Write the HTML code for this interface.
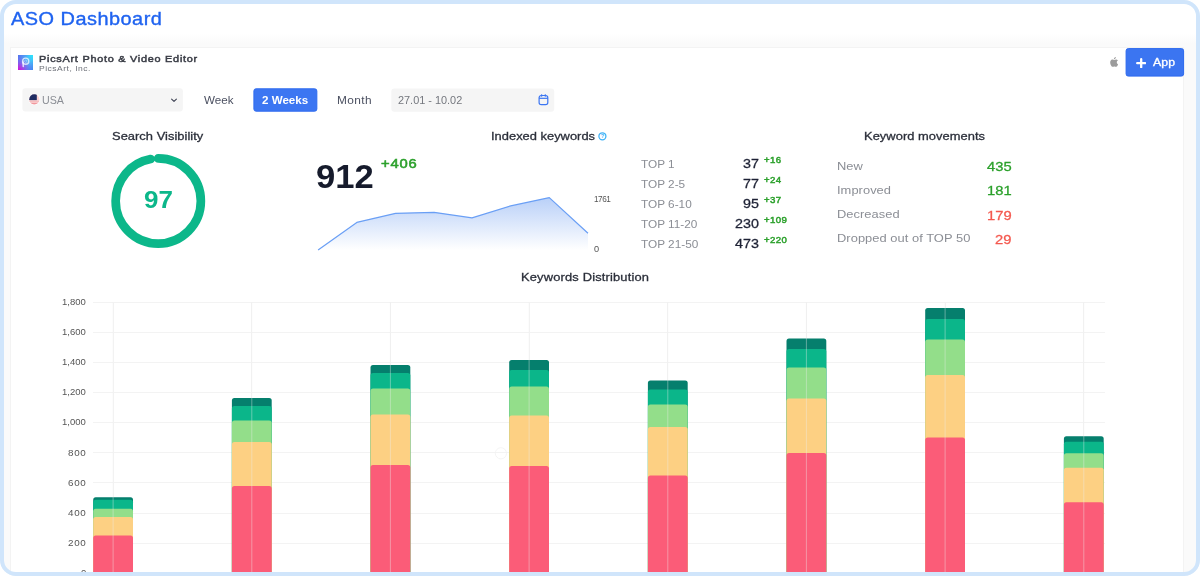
<!DOCTYPE html>
<html>
<head>
<meta charset="utf-8">
<title>ASO Dashboard</title>
<style>
*{box-sizing:border-box;margin:0;padding:0}
html,body{width:1200px;height:576px;overflow:hidden;background:#fff}
body{font-family:"Liberation Sans",sans-serif;position:relative;color:#2b2f3a}
.bg{position:absolute;left:0;top:0;width:1200px;height:576px;border-radius:16px;background:#fafafa;overflow:hidden}
.top{position:absolute;left:0;top:0;width:1200px;height:46px;background:linear-gradient(#fff 0,#fff 33px,#fafafa 43px,#fafafa 46px)}
.card{position:absolute;left:10px;top:47px;width:1174px;height:560px;background:#fff;border:1px solid #f3f3f3}
.frame{position:absolute;left:0;top:0;width:1200px;height:576px;border:4px solid #d0e5fb;border-radius:16px;z-index:50;pointer-events:none}
.abs{position:absolute;white-space:nowrap;line-height:1}
.t{position:absolute;white-space:nowrap;line-height:1;transform-origin:0 0;will-change:transform}
.r{text-align:right}
.g{color:#2f9e2c}
.rd{color:#f4594f}
.lbl{color:#8b8e95}
.num{color:#1e2235}
</style>
</head>
<body>
<div class="bg"><div class="top"></div><div class="card"></div></div>

<svg class="abs" style="left:0;top:0" width="1200" height="576" viewBox="0 0 1200 576">
<g stroke="#f3f3f3" stroke-width="1" shape-rendering="crispEdges"><line x1="93" x2="1104.5" y1="573.40" y2="573.40"/><line x1="93" x2="1104.5" y1="543.25" y2="543.25"/><line x1="93" x2="1104.5" y1="513.10" y2="513.10"/><line x1="93" x2="1104.5" y1="482.95" y2="482.95"/><line x1="93" x2="1104.5" y1="452.80" y2="452.80"/><line x1="93" x2="1104.5" y1="422.65" y2="422.65"/><line x1="93" x2="1104.5" y1="392.50" y2="392.50"/><line x1="93" x2="1104.5" y1="362.35" y2="362.35"/><line x1="93" x2="1104.5" y1="332.20" y2="332.20"/><line x1="93" x2="1104.5" y1="302.05" y2="302.05"/><line x1="113.1" x2="113.1" y1="302" y2="580"/><line x1="251.8" x2="251.8" y1="302" y2="580"/><line x1="390.4" x2="390.4" y1="302" y2="580"/><line x1="529.1" x2="529.1" y1="302" y2="580"/><line x1="667.8" x2="667.8" y1="302" y2="580"/><line x1="806.4" x2="806.4" y1="302" y2="580"/><line x1="945.1" x2="945.1" y1="302" y2="580"/><line x1="1083.8" x2="1083.8" y1="302" y2="580"/></g>
<g><rect x="93.2" y="497.2" width="39.8" height="82.8" rx="2.5" ry="2.5" fill="#057f6d"/><rect x="93.2" y="499.7" width="39.8" height="80.3" rx="2.5" ry="2.5" fill="#0bb68a"/><rect x="93.2" y="508.7" width="39.8" height="71.3" rx="2.5" ry="2.5" fill="#93de8a"/><rect x="93.2" y="517.0" width="39.8" height="63.0" rx="2.5" ry="2.5" fill="#fdd083"/><rect x="93.2" y="535.5" width="39.8" height="44.5" rx="2.5" ry="2.5" fill="#fb5c78"/><rect x="231.9" y="398.0" width="39.8" height="182.0" rx="2.5" ry="2.5" fill="#057f6d"/><rect x="231.9" y="406.0" width="39.8" height="174.0" rx="2.5" ry="2.5" fill="#0bb68a"/><rect x="231.9" y="420.6" width="39.8" height="159.4" rx="2.5" ry="2.5" fill="#93de8a"/><rect x="231.9" y="442.0" width="39.8" height="138.0" rx="2.5" ry="2.5" fill="#fdd083"/><rect x="231.9" y="486.0" width="39.8" height="94.0" rx="2.5" ry="2.5" fill="#fb5c78"/><rect x="370.5" y="365.0" width="39.8" height="215.0" rx="2.5" ry="2.5" fill="#057f6d"/><rect x="370.5" y="373.0" width="39.8" height="207.0" rx="2.5" ry="2.5" fill="#0bb68a"/><rect x="370.5" y="388.6" width="39.8" height="191.4" rx="2.5" ry="2.5" fill="#93de8a"/><rect x="370.5" y="414.4" width="39.8" height="165.6" rx="2.5" ry="2.5" fill="#fdd083"/><rect x="370.5" y="465.0" width="39.8" height="115.0" rx="2.5" ry="2.5" fill="#fb5c78"/><rect x="509.2" y="360.0" width="39.8" height="220.0" rx="2.5" ry="2.5" fill="#057f6d"/><rect x="509.2" y="370.0" width="39.8" height="210.0" rx="2.5" ry="2.5" fill="#0bb68a"/><rect x="509.2" y="386.4" width="39.8" height="193.6" rx="2.5" ry="2.5" fill="#93de8a"/><rect x="509.2" y="415.4" width="39.8" height="164.6" rx="2.5" ry="2.5" fill="#fdd083"/><rect x="509.2" y="466.0" width="39.8" height="114.0" rx="2.5" ry="2.5" fill="#fb5c78"/><rect x="647.9" y="380.6" width="39.8" height="199.4" rx="2.5" ry="2.5" fill="#057f6d"/><rect x="647.9" y="389.4" width="39.8" height="190.6" rx="2.5" ry="2.5" fill="#0bb68a"/><rect x="647.9" y="404.4" width="39.8" height="175.6" rx="2.5" ry="2.5" fill="#93de8a"/><rect x="647.9" y="427.0" width="39.8" height="153.0" rx="2.5" ry="2.5" fill="#fdd083"/><rect x="647.9" y="475.4" width="39.8" height="104.6" rx="2.5" ry="2.5" fill="#fb5c78"/><rect x="786.5" y="338.4" width="39.8" height="241.6" rx="2.5" ry="2.5" fill="#057f6d"/><rect x="786.5" y="349.0" width="39.8" height="231.0" rx="2.5" ry="2.5" fill="#0bb68a"/><rect x="786.5" y="367.4" width="39.8" height="212.6" rx="2.5" ry="2.5" fill="#93de8a"/><rect x="786.5" y="398.4" width="39.8" height="181.6" rx="2.5" ry="2.5" fill="#fdd083"/><rect x="786.5" y="453.0" width="39.8" height="127.0" rx="2.5" ry="2.5" fill="#fb5c78"/><rect x="925.2" y="308.0" width="39.8" height="272.0" rx="2.5" ry="2.5" fill="#057f6d"/><rect x="925.2" y="319.0" width="39.8" height="261.0" rx="2.5" ry="2.5" fill="#0bb68a"/><rect x="925.2" y="339.4" width="39.8" height="240.6" rx="2.5" ry="2.5" fill="#93de8a"/><rect x="925.2" y="375.0" width="39.8" height="205.0" rx="2.5" ry="2.5" fill="#fdd083"/><rect x="925.2" y="437.4" width="39.8" height="142.6" rx="2.5" ry="2.5" fill="#fb5c78"/><rect x="1063.9" y="436.2" width="39.8" height="143.8" rx="2.5" ry="2.5" fill="#057f6d"/><rect x="1063.9" y="441.7" width="39.8" height="138.3" rx="2.5" ry="2.5" fill="#0bb68a"/><rect x="1063.9" y="453.3" width="39.8" height="126.7" rx="2.5" ry="2.5" fill="#93de8a"/><rect x="1063.9" y="467.8" width="39.8" height="112.2" rx="2.5" ry="2.5" fill="#fdd083"/><rect x="1063.9" y="502.2" width="39.8" height="77.8" rx="2.5" ry="2.5" fill="#fb5c78"/></g>
<g stroke="rgba(235,235,235,0.4)" stroke-width="1"><line x1="113.1" x2="113.1" y1="302" y2="580"/><line x1="251.8" x2="251.8" y1="302" y2="580"/><line x1="390.4" x2="390.4" y1="302" y2="580"/><line x1="529.1" x2="529.1" y1="302" y2="580"/><line x1="667.8" x2="667.8" y1="302" y2="580"/><line x1="806.4" x2="806.4" y1="302" y2="580"/><line x1="945.1" x2="945.1" y1="302" y2="580"/><line x1="1083.8" x2="1083.8" y1="302" y2="580"/></g>

</svg>
<svg class="abs" style="left:490px;top:443px" width="22" height="22" viewBox="0 0 22 22"><circle cx="10.900" cy="10.300" r="5.600" fill="none" stroke="#f1f1f1" stroke-width="0.800"/></svg>

<div id="root">
<svg class="abs" style="left:0;top:0" width="1200" height="120" viewBox="0 0 1200 120">
<rect x="22.400" y="88.350" width="160.500" height="23.200" rx="3" fill="#f5f5f5"/>
<rect x="391.300" y="88.450" width="162.900" height="23.250" rx="3" fill="#f5f5f5"/>
<rect x="253.900" y="88.800" width="62.950" height="22.400" rx="2.200" fill="#3c76f2" stroke="#2f6bef" stroke-width="1"/>
<rect x="1126.100" y="48.600" width="57.500" height="27.500" rx="2.200" fill="#3b75f1" stroke="#2c68ee" stroke-width="1"/>
</svg>

<!-- app icon -->
<svg class="abs" style="left:18px;top:54.5px" width="15" height="15" viewBox="0 0 15 15">
<defs>
<linearGradient id="ig1" x1="0" y1="1" x2="1" y2="0"><stop offset="0" stop-color="#d60cd6"/><stop offset="0.32" stop-color="#8a62ee"/><stop offset="0.6" stop-color="#55aef6"/><stop offset="1" stop-color="#27e8fc"/></linearGradient>
<linearGradient id="ig2" x1="0" y1="0" x2="1" y2="1"><stop offset="0" stop-color="#4f74ee" stop-opacity="0.95"/><stop offset="0.42" stop-color="#5a6cf0" stop-opacity="0"/><stop offset="0.62" stop-color="#3f8df5" stop-opacity="0"/><stop offset="1" stop-color="#3f86f3" stop-opacity="0.95"/></linearGradient>
</defs>
<rect width="15" height="15" fill="url(#ig1)"/>
<rect width="15" height="15" fill="url(#ig2)"/>
<circle cx="7.700" cy="6.200" r="3.100" fill="none" stroke="#fff" stroke-opacity="0.72" stroke-width="1.400"/>
<circle cx="7.700" cy="6.200" r="1.200" fill="none" stroke="#fff" stroke-opacity="0.45" stroke-width="0.800"/>
<path d="M5 7 L5.300 11.500" stroke="#fff" stroke-opacity="0.75" stroke-width="1.600" stroke-linecap="round" fill="none"/>
</svg>

<!-- apple -->
<svg class="abs" style="left:1109.9px;top:57.2px" width="8.4" height="10.27" viewBox="0 0 18 22">
<path fill="#9c9c9c" d="M12.6 0c.1 1.2-.4 2.400-1.100 3.200-.8.900-2 1.600-3.100 1.500-.2-1.200.4-2.400 1.100-3.100C10.300.700 11.600.100 12.600 0zM16.700 7.500c-.1.100-2.200 1.300-2.200 3.900 0 3.100 2.700 4.100 2.800 4.200 0 .1-.4 1.500-1.400 2.900-.9 1.300-1.800 2.500-3.200 2.500s-1.800-.8-3.400-.8c-1.600 0-2.100.8-3.400.9-1.400.1-2.400-1.400-3.300-2.600C.800 15.900-.600 11.400 1.300 8.200c.9-1.600 2.600-2.600 4.400-2.700 1.400 0 2.700.9 3.500.9.800 0 2.400-1.100 4.100-1 .700 0 2.700.3 3.900 2.100z"/>
</svg>
<!-- +App button -->
<svg class="abs" style="left:1135.6px;top:57.6px" width="10.4" height="10.4" viewBox="0 0 10.4 10.4"><path d="M5.2 1.200V9.200M1.200 5.200H9.200" stroke="#fff" stroke-width="2.300" stroke-linecap="round"/></svg>

<!-- country select -->
<svg class="abs" style="left:28px;top:93px" width="13" height="13" viewBox="0 0 13 13">
<defs><clipPath id="fc"><circle cx="6.3" cy="6.400" r="5.100"/></clipPath></defs>
<circle cx="6.3" cy="6.4" r="5.9" fill="#fff" fill-opacity="0.8"/>
<g clip-path="url(#fc)">
<rect x="0" y="0" width="13" height="13" fill="#f9cfcf"/>
<rect x="0" y="8.3" width="13" height="1" fill="#f5b5b8"/>
<rect x="0" y="10.300" width="13" height="1.200" fill="#ee7f88"/>
<rect x="0" y="0" width="8.800" height="7.100" fill="#1f2c62"/>
</g>
</svg>
<svg class="abs" style="left:170px;top:96.5px" width="8" height="7" viewBox="0 0 8 7"><path d="M1.600 2.100L4 4.400L6.400 2.100" fill="none" stroke="#3c4052" stroke-width="1.100" stroke-linecap="round" stroke-linejoin="round"/></svg>


<svg class="abs" style="left:537.7px;top:94.25px" width="11" height="12" viewBox="0 0 11 12">
<rect x="1.100" y="1.500" width="8.700" height="9.200" rx="2.200" fill="none" stroke="#3c76f2" stroke-width="1.200"/>
<path d="M1.100 4.300H9.800" stroke="#3c76f2" stroke-width="1.200" fill="none"/>
<path d="M3.600 0.900V2M7.300 0.900V2" stroke="#3c76f2" stroke-width="1.500" stroke-linecap="round" fill="none"/>
</svg>

<!-- Search visibility -->
<svg class="abs" style="left:105px;top:148px" width="106" height="106" viewBox="105 148 106 106">
<circle cx="158.25" cy="201" r="42.6" fill="none" stroke="#0cb78a" stroke-width="8.700" stroke-linecap="round" stroke-dasharray="259.6 400" transform="rotate(-90 158.25 201)"/>
</svg>

<!-- Indexed keywords -->
<svg class="abs" style="left:597px;top:131px" width="11" height="11" viewBox="0 0 11 11"><circle cx="5.400" cy="5.300" r="3.500" fill="none" stroke="#3eb1f6" stroke-width="1.300"/><text x="5.400" y="7.300" font-size="5.600" font-weight="bold" text-anchor="middle" fill="#3eb1f6" font-family="Liberation Sans, sans-serif">?</text></svg>
<svg class="abs" style="left:300px;top:190px" width="300" height="65" viewBox="300 190 300 65">
<defs><linearGradient id="sg" x1="0" y1="0" x2="0" y2="1"><stop offset="0" stop-color="#b9d0f8"/><stop offset="1" stop-color="#ffffff"/></linearGradient></defs>
<path d="M318.1 250.100L356.800 222.400L395.500 213.300L434.100 212.300L472 217.900L510.700 205.900L549.300 197.600L588 233.300V250.100Z" fill="url(#sg)"/>
<path d="M318.1 250.100L356.800 222.400L395.500 213.300L434.100 212.300L472 217.900L510.700 205.900L549.300 197.600L588 233.300" fill="none" stroke="#6a9ff5" stroke-width="1.200" stroke-linejoin="round"/>
</svg>

<!-- TOP list -->



<!-- Keyword movements -->

<div class="t" style="left:11.08px;top:11px;font-size:17.8px;color:#1f63f0;letter-spacing:0.432px;transform:scaleX(1.12);-webkit-text-stroke:0.35px #1f63f0;">ASO Dashboard</div>
<div class="t" style="left:39.14px;top:54px;font-size:9.7px;color:#3b3e47;letter-spacing:0.672px;transform:scaleX(1.12);-webkit-text-stroke:0.5px #3b3e47;">PicsArt Photo &amp; Video Editor</div>
<div class="t" style="left:39.14px;top:65px;font-size:7.6px;color:#6d7078;letter-spacing:0.449px;transform:scaleX(1.12);">PicsArt, Inc.</div>
<div class="t" style="left:42.0px;top:96px;font-size:10px;color:#8b8e95;transform:scaleX(1.0684);">USA</div>
<div class="t" style="left:203.7px;top:95px;font-size:10.6px;color:#4b5061;transform:scaleX(1.0953);">Week</div>
<div class="t" style="left:262.22px;top:96px;font-size:10.4px;color:#fff;font-weight:bold;transform:scaleX(1.1166);">2 Weeks</div>
<div class="t" style="left:337.16px;top:95px;font-size:10.6px;color:#4b5061;letter-spacing:0.366px;transform:scaleX(1.12);">Month</div>
<div class="t" style="left:398.0px;top:95px;font-size:10.8px;color:#74777e;transform:scaleX(1.0088);">27.01 - 10.02</div>
<div class="t" style="left:111.92px;top:131px;font-size:11.5px;color:#2b2f3a;letter-spacing:0.032px;transform:scaleX(1.12);-webkit-text-stroke:0.3px #2b2f3a;">Search Visibility</div>
<div class="t" style="left:490.58px;top:131px;font-size:11.5px;color:#2b2f3a;letter-spacing:0.013px;transform:scaleX(1.12);-webkit-text-stroke:0.3px #2b2f3a;">Indexed keywords</div>
<div class="t" style="left:864.06px;top:131px;font-size:11.5px;color:#2b2f3a;letter-spacing:0.04px;transform:scaleX(1.12);-webkit-text-stroke:0.3px #2b2f3a;">Keyword movements</div>
<div class="t" style="left:521.36px;top:272px;font-size:11.5px;color:#2b2f3a;letter-spacing:0.152px;transform:scaleX(1.12);-webkit-text-stroke:0.3px #2b2f3a;">Keywords Distribution</div>
<div class="t" style="left:144.08px;top:188px;font-size:23.8px;color:#0cb78a;font-weight:bold;transform:scaleX(1.0909);">97</div>
<div class="t" style="left:315.92px;top:160px;font-size:33.8px;color:#161b2c;font-weight:bold;transform:scaleX(1.0233);">912</div>
<div class="t" style="left:381.22px;top:157px;font-size:13.2px;color:#2ba02b;letter-spacing:0.756px;transform:scaleX(1.12);-webkit-text-stroke:0.55px #2ba02b;">+406</div>
<div class="t" style="left:593.8px;top:196px;font-size:8.2px;color:#555;letter-spacing:-0.467px;">1761</div>
<div class="t" style="left:594.32px;top:246px;font-size:8.2px;color:#555;transform:scaleX(1.12);">0</div>
<div class="t" style="left:1152.78px;top:57px;font-size:11px;color:#fff;letter-spacing:0.071px;transform:scaleX(1.12);-webkit-text-stroke:0.3px #fff;">App</div>
<div class="t" style="left:641.35px;top:158px;font-size:11.7px;color:#8b8e95;transform:scaleX(1.0089);">TOP 1</div>
<div class="t" style="left:743.37px;top:157px;font-size:13.3px;color:#1e2235;transform:scaleX(1.0759);-webkit-text-stroke:0.3px #1e2235;">37</div>
<div class="t" style="left:764.02px;top:156px;font-size:8.6px;color:#2ba02b;letter-spacing:0.333px;transform:scaleX(1.12);-webkit-text-stroke:0.45px #2ba02b;">+16</div>
<div class="t" style="left:641.35px;top:178px;font-size:11.7px;color:#8b8e95;transform:scaleX(1.0089);">TOP 2-5</div>
<div class="t" style="left:743.37px;top:177px;font-size:13.3px;color:#1e2235;transform:scaleX(1.0759);-webkit-text-stroke:0.3px #1e2235;">77</div>
<div class="t" style="left:764.02px;top:176px;font-size:8.6px;color:#2ba02b;letter-spacing:0.333px;transform:scaleX(1.12);-webkit-text-stroke:0.45px #2ba02b;">+24</div>
<div class="t" style="left:641.35px;top:198px;font-size:11.7px;color:#8b8e95;transform:scaleX(1.0089);">TOP 6-10</div>
<div class="t" style="left:743.1px;top:197px;font-size:13.3px;color:#1e2235;transform:scaleX(1.0759);-webkit-text-stroke:0.3px #1e2235;">95</div>
<div class="t" style="left:764.02px;top:196px;font-size:8.6px;color:#2ba02b;letter-spacing:0.333px;transform:scaleX(1.12);-webkit-text-stroke:0.45px #2ba02b;">+37</div>
<div class="t" style="left:641.35px;top:218px;font-size:11.7px;color:#8b8e95;transform:scaleX(1.0089);">TOP 11-20</div>
<div class="t" style="left:735.3px;top:217px;font-size:13.3px;color:#1e2235;transform:scaleX(1.0759);-webkit-text-stroke:0.3px #1e2235;">230</div>
<div class="t" style="left:764.02px;top:216px;font-size:8.6px;color:#2ba02b;letter-spacing:0.333px;transform:scaleX(1.12);-webkit-text-stroke:0.45px #2ba02b;">+109</div>
<div class="t" style="left:641.35px;top:238px;font-size:11.7px;color:#8b8e95;transform:scaleX(1.0089);">TOP 21-50</div>
<div class="t" style="left:735.3px;top:237px;font-size:13.3px;color:#1e2235;transform:scaleX(1.0759);-webkit-text-stroke:0.3px #1e2235;">473</div>
<div class="t" style="left:764.02px;top:236px;font-size:8.6px;color:#2ba02b;letter-spacing:0.333px;transform:scaleX(1.12);-webkit-text-stroke:0.45px #2ba02b;">+220</div>
<div class="t" style="left:837.48px;top:161px;font-size:11.5px;color:#8b8e95;letter-spacing:0.038px;transform:scaleX(1.12);">New</div>
<div class="t" style="left:987.0px;top:160px;font-size:13.3px;color:#2ba02b;transform:scaleX(1.108);-webkit-text-stroke:0.3px #2ba02b;">435</div>
<div class="t" style="left:837.48px;top:185px;font-size:11.5px;color:#8b8e95;letter-spacing:0.038px;transform:scaleX(1.12);">Improved</div>
<div class="t" style="left:987.0px;top:184px;font-size:13.3px;color:#2ba02b;transform:scaleX(1.108);-webkit-text-stroke:0.3px #2ba02b;">181</div>
<div class="t" style="left:837.48px;top:209px;font-size:11.5px;color:#8b8e95;letter-spacing:0.038px;transform:scaleX(1.12);">Decreased</div>
<div class="t" style="left:987.0px;top:209px;font-size:13.3px;color:#f4594f;transform:scaleX(1.108);-webkit-text-stroke:0.3px #f4594f;">179</div>
<div class="t" style="left:837.48px;top:233px;font-size:11.5px;color:#8b8e95;letter-spacing:0.038px;transform:scaleX(1.12);">Dropped out of TOP 50</div>
<div class="t" style="left:995.31px;top:233px;font-size:13.3px;color:#f4594f;transform:scaleX(1.108);-webkit-text-stroke:0.3px #f4594f;">29</div>
<div class="t" style="left:80.94px;top:569px;font-size:8.8px;color:#555;transform:scaleX(1.081);">0</div>
<div class="t" style="left:68.44px;top:539px;font-size:8.8px;color:#555;letter-spacing:0.589px;transform:scaleX(1.12);">200</div>
<div class="t" style="left:68.44px;top:509px;font-size:8.8px;color:#555;letter-spacing:0.589px;transform:scaleX(1.12);">400</div>
<div class="t" style="left:68.44px;top:479px;font-size:8.8px;color:#555;letter-spacing:0.589px;transform:scaleX(1.12);">600</div>
<div class="t" style="left:68.44px;top:449px;font-size:8.8px;color:#555;letter-spacing:0.589px;transform:scaleX(1.12);">800</div>
<div class="t" style="left:62.29px;top:418px;font-size:8.8px;color:#555;transform:scaleX(1.081);">1,000</div>
<div class="t" style="left:62.29px;top:388px;font-size:8.8px;color:#555;transform:scaleX(1.081);">1,200</div>
<div class="t" style="left:62.29px;top:358px;font-size:8.8px;color:#555;transform:scaleX(1.081);">1,400</div>
<div class="t" style="left:62.29px;top:328px;font-size:8.8px;color:#555;transform:scaleX(1.081);">1,600</div>
<div class="t" style="left:62.29px;top:298px;font-size:8.8px;color:#555;transform:scaleX(1.081);">1,800</div>
</div>
<div class="frame"></div>
<style>

.tl{font-size:11.8px;letter-spacing:0.3px}
.tn{font-size:14px;letter-spacing:0.5px;-webkit-text-stroke:0.3px #1e2235}
.td{font-size:9px;font-weight:bold;letter-spacing:0.2px}
.kl{font-size:11.6px;letter-spacing:0.35px}
.kn{font-size:14px;letter-spacing:0.4px;-webkit-text-stroke:0.3px currentColor}
</style>
</body>
</html>
